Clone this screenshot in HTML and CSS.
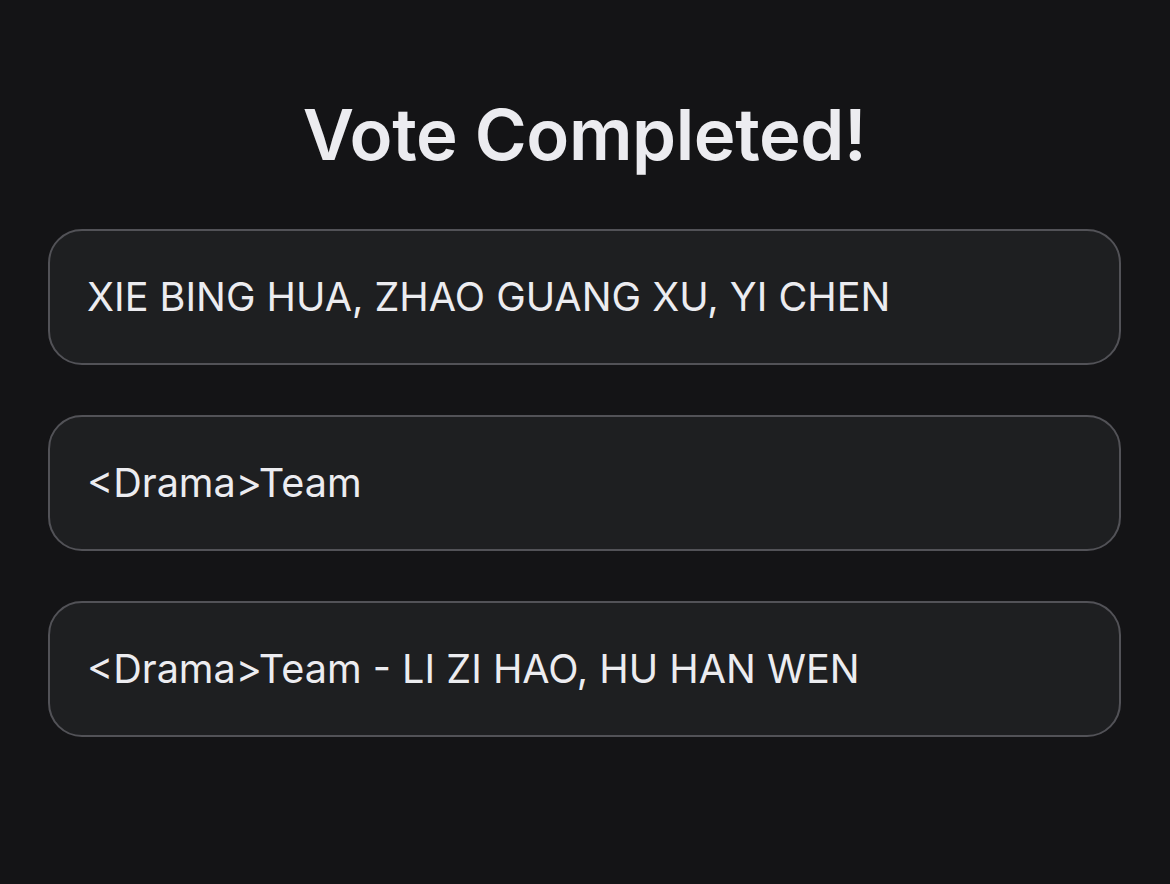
FILE: index.html
```html
<!DOCTYPE html>
<html lang="en">
<head>
<meta charset="utf-8">
<title>Vote Completed</title>
<link rel="stylesheet" href="styles.css">
</head>
<body>
  <main class="result">
    <h1 class="result-title">Vote Completed!</h1>
    <ul class="choice-list">
      <li class="choice">XIE BING HUA, ZHAO GUANG XU, YI CHEN</li>
      <li class="choice">&lt;Drama&gt;Team</li>
      <li class="choice">&lt;Drama&gt;Team - LI ZI HAO, HU HAN WEN</li>
    </ul>
  </main>
</body>
</html>
```

FILE: styles.css
```css
html, body {
  margin: 0;
  padding: 0;
  background: #141416;
  color: #ececf0;
  font-family: Inter, "Noto Sans", sans-serif;
}

.result {
  padding: 92px 49px 0 48px;
}

.result-title {
  margin: 0;
  text-align: center;
  font-size: 70.6px;
  font-weight: 600;
  line-height: 86px;
  letter-spacing: -0.4px;
  color: #ececf0;
}

.choice-list {
  list-style: none;
  margin: 51px 0 0;
  padding: 0;
  display: flex;
  flex-direction: column;
  gap: 50px;
}

.choice {
  box-sizing: border-box;
  height: 136px;
  display: flex;
  align-items: center;
  padding: 0 37px;
  border: 2px solid #525257;
  border-radius: 34px;
  background: #1e1f21;
  font-size: 39.6px;
  font-weight: 400;
  color: #ececf0;
}
```
